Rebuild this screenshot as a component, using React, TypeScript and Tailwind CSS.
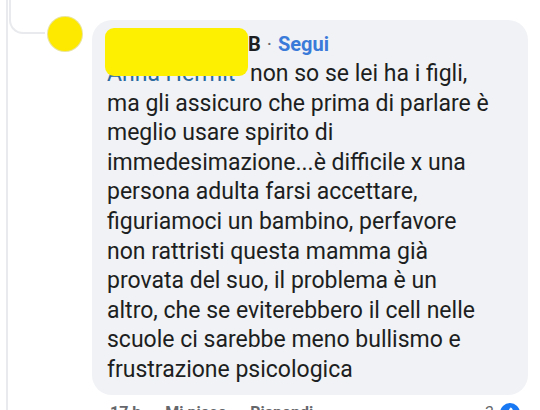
import { ThumbsUp } from 'lucide-react'

const lines = [
  'ma gli assicuro che prima di parlare è',
  'meglio usare spirito di',
  'immedesimazione...è difficile x una',
  'persona adulta farsi accettare,',
  'figuriamoci un bambino, perfavore',
  'non rattristi questa mamma già',
  'provata del suo, il problema è un',
  'altro, che se eviterebbero il cell nelle',
  'scuole ci sarebbe meno bullismo e',
  'frustrazione psicologica',
]

export default function App() {
  return (
    <div
      className="relative w-[540px] h-[410px] overflow-hidden bg-white text-[#1c1e21]"
      style={{ fontFamily: 'Roboto, "Noto Sans", sans-serif' }}
    >
      {/* thread connector lines */}
      <div className="absolute left-[6px] top-0 bottom-0 w-[2px] bg-[#e9eaed]" />
      <div className="absolute left-[9px] -top-[4px] w-[36px] h-[38px] border-l-2 border-b-2 border-[#e9eaed] rounded-bl-[14px]" />

      <div className="flex gap-[10px] pl-[48px] pt-[17px]">
        <div className="w-[34px] h-[34px] shrink-0 rounded-full bg-[#fde900] ring-1 ring-[#c9b800]/40" />

        <div className="flex flex-col">
          <div className="relative mt-[3px] w-[436px] rounded-[20px] bg-[#f0f2f5] pl-[15px] pr-[10px] pt-[9px] pb-[10px]">
            {/* redaction over the name */}
            <div className="absolute left-[13px] top-[8px] w-[143px] h-[48px] rounded-[9px] bg-[#fdf000]" />

            <div className="flex items-center h-[30px] pl-[141px] text-[20px] font-bold leading-none">
              <span>B</span>
              <span className="mx-[6px] font-normal text-[#65676b]">·</span>
              <span className="text-[#3a7ad9]">Segui</span>
            </div>

            <div className="text-[23px] leading-[29.6px] whitespace-nowrap">
              <div>
                <span className="inline-block w-[143px] overflow-hidden align-bottom text-[#2c6aa0]">Anna Hermit</span>
                non so se lei ha i figli,
              </div>
              {lines.map((l, i) => (
                <div key={i}>{l}</div>
              ))}
            </div>
          </div>

          <div className="flex items-center mt-[6px] pl-[18px] pr-[8px] text-[16px] font-bold text-[#65676b]">
            <span>17 h</span>
            <span className="ml-[24px]">Mi piace</span>
            <span className="ml-[24px]">Rispondi</span>
            <span className="ml-auto mr-[6px] font-normal">3</span>
            <span className="flex items-center justify-center w-[20px] h-[20px] rounded-full bg-[#1877f2]">
              <ThumbsUp className="w-[11px] h-[11px] text-white" fill="white" />
            </span>
          </div>
        </div>
      </div>
    </div>
  )
}
